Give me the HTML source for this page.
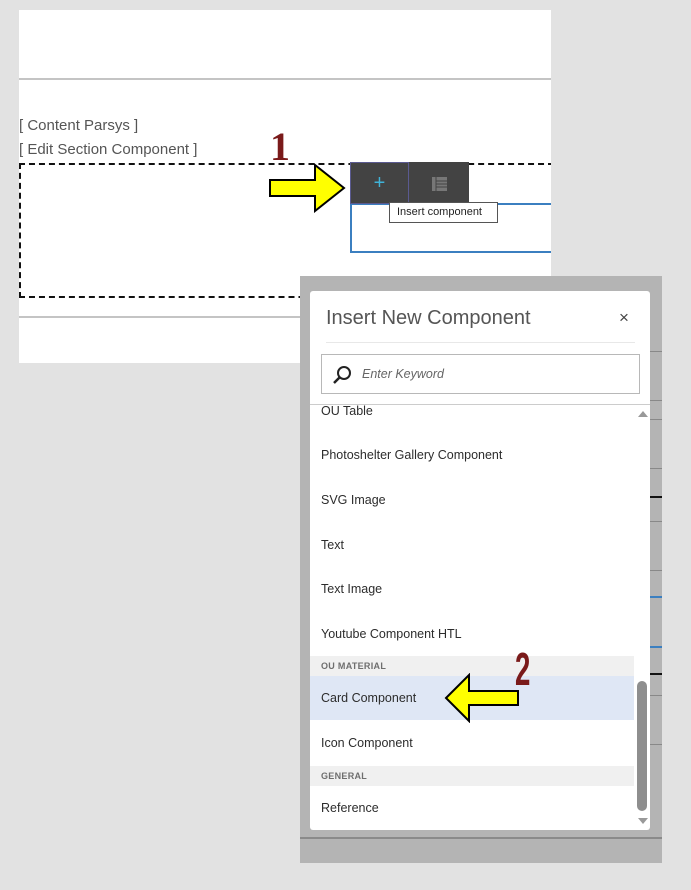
<!DOCTYPE html>
<html><head><style>
*{margin:0;padding:0;box-sizing:border-box}
body{width:691px;height:890px;background:#e2e2e2;position:relative;overflow:hidden;font-family:"Liberation Sans",sans-serif}
.a{position:absolute}
.item{position:absolute;left:11px;font-size:12.5px;color:#2c2c2c}
.hd{position:absolute;left:0;width:324px;height:20px;background:#f0f0f0;font-size:9px;font-weight:bold;color:#6e6e6e;padding:5px 0 0 11px;letter-spacing:.3px}
</style></head><body>
<div class="a" style="left:19px;top:10px;width:532px;height:353px;background:#fff;overflow:hidden">
 <div class="a" style="left:0;top:68px;width:532px;height:2px;background:#c4c4c4"></div>
 <div class="a" style="left:0;top:306px;width:532px;height:2px;background:#c4c4c4"></div>
 <div class="a" style="left:0;top:107px;font-size:15px;color:#555">[ Content Parsys ]</div>
 <div class="a" style="left:0;top:131px;font-size:15px;color:#555">[ Edit Section Component ]</div>
 <div class="a" style="left:0;top:153px;width:545px;height:135px;border:2px dashed #111"></div>
 <div class="a" style="left:331px;top:193px;width:210px;height:50px;border:2px solid #3b7fc0"></div>
</div>
<div class="a" style="left:350px;top:162px;width:119px;height:42px;background:#434343"></div>
<div class="a" style="left:350px;top:162px;width:59px;height:42px;border:1px solid #5a5a90;color:#3fb3d8;font-size:20px;text-align:center;line-height:40px">+</div>
<svg class="a" style="left:431px;top:176px" width="17" height="16"><rect x="1" y="1" width="15" height="14" fill="#777"/><g stroke="#434343"><line x1="5" y1="1" x2="5" y2="15"/><line x1="5" y1="5" x2="16" y2="5"/><line x1="5" y1="8" x2="16" y2="8"/><line x1="5" y1="11" x2="16" y2="11"/></g></svg>
<div class="a" style="left:389px;top:202px;width:109px;height:21px;background:#fff;border:1px solid #555;font-size:11px;line-height:19px;padding-left:7px;color:#222">Insert component</div>
<div class="a" style="left:270px;top:124px;font-size:40px;font-weight:bold;color:#7a1a1a;font-family:'Liberation Serif',serif;line-height:46px">1</div>
<svg class="a" style="left:268px;top:163px" width="80" height="50"><polygon points="2,17 47,17 47,2 76,25 47,48 47,33 2,33" fill="#ff0" stroke="#000" stroke-width="2"/></svg>

<div class="a" style="left:300px;top:276px;width:362px;height:587px;background:#b4b4b4"></div>
<div class="a" style="left:300px;top:837px;width:362px;height:2px;background:#8a8a8a"></div>
<div class="a" style="left:650px;top:351px;width:12px;height:1px;background:#888"></div>
<div class="a" style="left:650px;top:400px;width:12px;height:1px;background:#888"></div>
<div class="a" style="left:650px;top:419px;width:12px;height:1px;background:#888"></div>
<div class="a" style="left:650px;top:468px;width:12px;height:1px;background:#888"></div>
<div class="a" style="left:650px;top:521px;width:12px;height:1px;background:#888"></div>
<div class="a" style="left:650px;top:570px;width:12px;height:1px;background:#888"></div>
<div class="a" style="left:650px;top:596px;width:12px;height:2px;background:#3b7fc0"></div>
<div class="a" style="left:650px;top:646px;width:12px;height:2px;background:#3b7fc0"></div>
<div class="a" style="left:650px;top:496px;width:12px;height:2px;border-top:2px dashed #111"></div>
<div class="a" style="left:650px;top:673px;width:12px;height:2px;border-top:2px dashed #111"></div>
<div class="a" style="left:650px;top:695px;width:12px;height:1px;background:#888"></div>
<div class="a" style="left:650px;top:744px;width:12px;height:1px;background:#888"></div>

<div class="a" style="left:310px;top:291px;width:340px;height:539px;background:#fff;border-radius:3px">
 <div class="a" style="left:16px;top:16px;font-size:20px;color:#555">Insert New Component</div>
 <div class="a" style="left:309px;top:17px;font-size:17px;color:#444">×</div>
 <div class="a" style="left:16px;top:51px;width:309px;height:1px;background:#e8e8e8"></div>
 <div class="a" style="left:11px;top:63px;width:319px;height:40px;border:1px solid #b8b8b8"></div>
 <svg class="a" style="left:22px;top:74px" width="20" height="20"><circle cx="12" cy="8" r="6" fill="none" stroke="#222" stroke-width="2"/><line x1="8" y1="12" x2="2" y2="18" stroke="#222" stroke-width="2.5"/></svg>
 <div class="a" style="left:52px;top:76px;font-size:12.5px;font-style:italic;color:#666">Enter Keyword</div>
 <div class="a" style="left:0;top:113px;width:340px;height:1px;background:#ccc"></div>
 <div class="item" style="top:113px">OU Table</div>
 <div class="item" style="top:157px">Photoshelter Gallery Component</div>
 <div class="item" style="top:202px">SVG Image</div>
 <div class="item" style="top:247px">Text</div>
 <div class="item" style="top:291px">Text Image</div>
 <div class="item" style="top:336px">Youtube Component HTL</div>
 <div class="hd" style="top:365px">OU MATERIAL</div>
 <div class="a" style="left:0;top:385px;width:324px;height:44px;background:#dfe7f5"></div>
 <div class="item" style="top:400px">Card Component</div>
 <div class="item" style="top:445px">Icon Component</div>
 <div class="hd" style="top:475px">GENERAL</div>
 <div class="item" style="top:510px">Reference</div>
 <div class="a" style="left:328px;top:120px;width:0;height:0;border-left:5px solid transparent;border-right:5px solid transparent;border-bottom:6px solid #999"></div>
 <div class="a" style="left:327px;top:390px;width:10px;height:130px;background:#8e8e8e;border-radius:5px"></div>
 <div class="a" style="left:328px;top:527px;width:0;height:0;border-left:5px solid transparent;border-right:5px solid transparent;border-top:6px solid #999"></div>
</div>
<div class="a" style="left:515px;top:646px;font-size:46px;font-weight:bold;color:#7a1a1a;font-family:'Liberation Sans Narrow','Liberation Sans',sans-serif;transform:scaleX(.6);transform-origin:left;line-height:46px">2</div>
<svg class="a" style="left:443px;top:673px" width="78" height="50"><polygon points="3,25 26,2 26,18 75,18 75,32 26,32 26,48" fill="#ff0" stroke="#000" stroke-width="2"/></svg>
</body></html>
